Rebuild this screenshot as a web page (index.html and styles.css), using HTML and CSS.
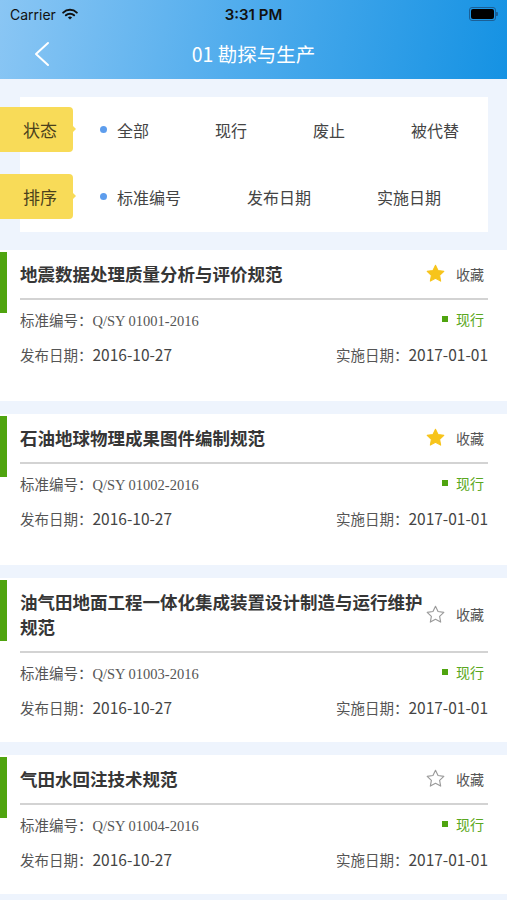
FILE: index.html
```html
<!DOCTYPE html>
<html lang="zh-CN">

<head>
	<meta charset="UTF-8">
	<meta name="viewport" content="width=device-width, initial-scale=1.0">
	<title>01 勘探与生产</title>
	<link rel="stylesheet" href="styles.css">
</head>

<body>

	<!-- Top bar: status + navigation -->
	<header class="topbar">
		<div class="statusbar">
			<div class="carrier">
				Carrier
				<svg class="wifi" viewBox="0 0 16 12" width="16" height="12" aria-hidden="true">
					<path d="M1.2 4.6a9.8 9.8 0 0 1 13.6 0" fill="none" stroke="#111" stroke-width="2" stroke-linecap="round" />
					<path d="M3.9 7.3a5.9 5.9 0 0 1 8.2 0" fill="none" stroke="#111" stroke-width="2" stroke-linecap="round" />
					<path d="M8 11.6L5.9 9.5a3 3 0 0 1 4.2 0z" fill="#111" />
				</svg>
			</div>
			<div class="clock">3:31 PM</div>
			<div class="battery-wrap">
				<span class="battery"><span class="battery-level"></span></span>
				<span class="battery-nub"></span>
			</div>
		</div>
		<nav class="navbar">
			<button class="back" aria-label="返回">
				<svg viewBox="0 0 18 26" width="18" height="26" aria-hidden="true">
					<path d="M15 2L3 13l12 11" fill="none" stroke="#fff" stroke-width="2" stroke-linecap="round" stroke-linejoin="round" />
				</svg>
			</button>
			<h1 class="nav-title">01 勘探与生产</h1>
			<span class="nav-spacer"></span>
		</nav>
	</header>

	<!-- Filters -->
	<section class="filters">
		<div class="filter-row">
			<span class="tag">状态</span>
			<ul class="options options-status">
				<li class="option selected"><span class="dot"></span>全部</li>
				<li class="option"><span class="dot"></span>现行</li>
				<li class="option"><span class="dot"></span>废止</li>
				<li class="option"><span class="dot"></span>被代替</li>
			</ul>
		</div>
		<div class="filter-row">
			<span class="tag">排序</span>
			<ul class="options options-sort">
				<li class="option selected"><span class="dot"></span>标准编号</li>
				<li class="option"><span class="dot"></span>发布日期</li>
				<li class="option"><span class="dot"></span>实施日期</li>
			</ul>
		</div>
	</section>

	<!-- Standards list -->
	<main class="list">

		<article class="card card-roomy">
			<span class="card-bar"></span>
			<div class="card-body">
				<div class="card-head">
					<h2 class="card-title">地震数据处理质量分析与评价规范</h2>
					<span class="fav">
						<svg class="star" viewBox="0 0 24 24" width="21" height="21" aria-hidden="true">
							<path d="M12 2.6l2.9 6 6.6.9-4.8 4.6 1.2 6.6L12 17.5l-5.9 3.2 1.2-6.6-4.8-4.6 6.6-.9z" fill="#f7c41b" stroke="#f7c41b" stroke-width="1.2" stroke-linejoin="round" />
						</svg>
						收藏
					</span>
				</div>
				<div class="meta-row">
					<span class="meta-label">标准编号：<span class="code">Q/SY 01001-2016</span></span>
					<span class="state"><span class="state-mark"></span>现行</span>
				</div>
				<div class="date-row">
					<span>发布日期：<span class="date">2016-10-27</span></span>
					<span>实施日期：<span class="date">2017-01-01</span></span>
				</div>
			</div>
		</article>

		<article class="card card-roomy">
			<span class="card-bar"></span>
			<div class="card-body">
				<div class="card-head">
					<h2 class="card-title">石油地球物理成果图件编制规范</h2>
					<span class="fav">
						<svg class="star" viewBox="0 0 24 24" width="21" height="21" aria-hidden="true">
							<path d="M12 2.6l2.9 6 6.6.9-4.8 4.6 1.2 6.6L12 17.5l-5.9 3.2 1.2-6.6-4.8-4.6 6.6-.9z" fill="#f7c41b" stroke="#f7c41b" stroke-width="1.2" stroke-linejoin="round" />
						</svg>
						收藏
					</span>
				</div>
				<div class="meta-row">
					<span class="meta-label">标准编号：<span class="code">Q/SY 01002-2016</span></span>
					<span class="state"><span class="state-mark"></span>现行</span>
				</div>
				<div class="date-row">
					<span>发布日期：<span class="date">2016-10-27</span></span>
					<span>实施日期：<span class="date">2017-01-01</span></span>
				</div>
			</div>
		</article>

		<article class="card">
			<span class="card-bar"></span>
			<div class="card-body">
				<div class="card-head">
					<h2 class="card-title">油气田地面工程一体化集成装置设计制造与运行维护规范</h2>
					<span class="fav">
						<svg class="star" viewBox="0 0 24 24" width="21" height="21" aria-hidden="true">
							<path d="M12 2.6l2.9 6 6.6.9-4.8 4.6 1.2 6.6L12 17.5l-5.9 3.2 1.2-6.6-4.8-4.6 6.6-.9z" fill="none" stroke="#9a9a9a" stroke-width="1.3" stroke-linejoin="round" />
						</svg>
						收藏
					</span>
				</div>
				<div class="meta-row">
					<span class="meta-label">标准编号：<span class="code">Q/SY 01003-2016</span></span>
					<span class="state"><span class="state-mark"></span>现行</span>
				</div>
				<div class="date-row">
					<span>发布日期：<span class="date">2016-10-27</span></span>
					<span>实施日期：<span class="date">2017-01-01</span></span>
				</div>
			</div>
		</article>

		<article class="card">
			<span class="card-bar"></span>
			<div class="card-body">
				<div class="card-head">
					<h2 class="card-title">气田水回注技术规范</h2>
					<span class="fav">
						<svg class="star" viewBox="0 0 24 24" width="21" height="21" aria-hidden="true">
							<path d="M12 2.6l2.9 6 6.6.9-4.8 4.6 1.2 6.6L12 17.5l-5.9 3.2 1.2-6.6-4.8-4.6 6.6-.9z" fill="none" stroke="#9a9a9a" stroke-width="1.3" stroke-linejoin="round" />
						</svg>
						收藏
					</span>
				</div>
				<div class="meta-row">
					<span class="meta-label">标准编号：<span class="code">Q/SY 01004-2016</span></span>
					<span class="state"><span class="state-mark"></span>现行</span>
				</div>
				<div class="date-row">
					<span>发布日期：<span class="date">2016-10-27</span></span>
					<span>实施日期：<span class="date">2017-01-01</span></span>
				</div>
			</div>
		</article>

	</main>

</body>

</html>
```

FILE: styles.css
```css
body {
	margin: 0;
	background-color: #eef4fd;
	font-family: "Noto Sans CJK SC", "Noto Sans", sans-serif;
	color: #333;
}

/* top bar */

.topbar {
	height: 79px;
	background: linear-gradient(100deg, #8ac6f4 0%, #52aded 45%, #1592e3 100%);
}

.statusbar {
	height: 28px;
	display: grid;
	grid-template-columns: 1fr auto 1fr;
	align-items: center;
	font-family: "Inter", "Liberation Sans", sans-serif;
	color: #111;
}

.carrier {
	display: flex;
	align-items: center;
	gap: 6px;
	padding-left: 10px;
	font-size: 14px;
}

.clock {
	font-size: 15px;
	font-weight: 600;
}

.battery-wrap {
	display: flex;
	align-items: center;
	justify-content: flex-end;
	padding-right: 9px;
}

.battery {
	display: block;
	width: 23px;
	height: 10px;
	padding: 1px;
	border: 1px solid #1b5f96;
	border-radius: 3px;
}

.battery-level {
	display: block;
	height: 100%;
	background-color: #000;
	border-radius: 2px;
}

.battery-nub {
	width: 2px;
	height: 4px;
	background-color: #1b5f96;
	border-radius: 0 1px 1px 0;
}

.navbar {
	height: 51px;
	display: grid;
	grid-template-columns: 80px 1fr 80px;
	align-items: center;
}

.back {
	border: none;
	background: none;
	padding: 0 0 0 33px;
	display: flex;
	cursor: pointer;
}

.nav-title {
	margin: 0;
	text-align: center;
	font-size: 19.5px;
	font-weight: 400;
	color: #fff;
}

/* filters */

.filters {
	margin: 18px 19px 0 20px;
	padding: 10px 0 13px;
	background-color: #fff;
	display: flex;
	flex-direction: column;
	gap: 22px;
}

.filter-row {
	display: flex;
	align-items: center;
}

.tag {
	position: relative;
	flex: none;
	margin-left: -20px;
	width: 50px;
	height: 45px;
	padding-left: 23px;
	line-height: 45px;
	font-size: 17px;
	color: #4b411c;
	background-color: #f8db58;
	border-radius: 0 4px 4px 0;
}

.tag::after {
	content: "";
	position: absolute;
	right: -3px;
	top: 19px;
	border-top: 3.5px solid transparent;
	border-bottom: 3.5px solid transparent;
	border-left: 3px solid #f8db58;
}

.options {
	list-style: none;
	margin: 0 0 0 27px;
	padding: 0;
	display: grid;
}

.options-status {
	grid-template-columns: repeat(4, 98px);
}

.options-sort {
	grid-template-columns: repeat(3, 130px);
}

.option {
	display: flex;
	align-items: center;
	gap: 10px;
	font-size: 16px;
	color: #444;
}

.dot {
	width: 7px;
	height: 7px;
	border-radius: 50%;
}

.option.selected .dot {
	background-color: #5d9ded;
}

/* list */

.list {
	margin-top: 18px;
	display: flex;
	flex-direction: column;
	gap: 13px;
}

.card {
	display: flex;
	align-items: flex-start;
	background-color: #fff;
	padding-bottom: 25px;
}

.card-roomy {
	padding-bottom: 37px;
}

.card-bar {
	flex: none;
	width: 7px;
	height: 61px;
	margin-top: 2px;
	background-color: #4fa40f;
}

.card-body {
	flex: 1;
	margin: 0 19px 0 13px;
}

.card-head {
	display: flex;
	align-items: center;
	padding: 11px 0 12px;
	border-bottom: 2px solid #d3d3d3;
}

.card-title {
	flex: 1;
	margin: 0;
	font-size: 17.5px;
	line-height: 25px;
	font-weight: 700;
	color: #363636;
}

.fav {
	flex: none;
	display: flex;
	align-items: center;
	gap: 10px;
	padding-right: 4px;
	font-size: 14px;
	color: #555;
}

.meta-row,
.date-row {
	display: flex;
	justify-content: space-between;
	align-items: center;
	height: 20px;
	font-size: 14.5px;
	color: #555;
}

.meta-row {
	margin-top: 9px;
}

.date-row {
	margin-top: 15px;
}

.code {
	font-family: "Liberation Serif", serif;
	font-size: 14.5px;
	color: #555;
}

.date {
	font-size: 15.5px;
	color: #444;
}

.state {
	display: flex;
	align-items: center;
	gap: 8px;
	padding-right: 4px;
	font-size: 14px;
	color: #5aa720;
}

.state-mark {
	width: 6px;
	height: 6px;
	background-color: #4fa40f;
}
```
